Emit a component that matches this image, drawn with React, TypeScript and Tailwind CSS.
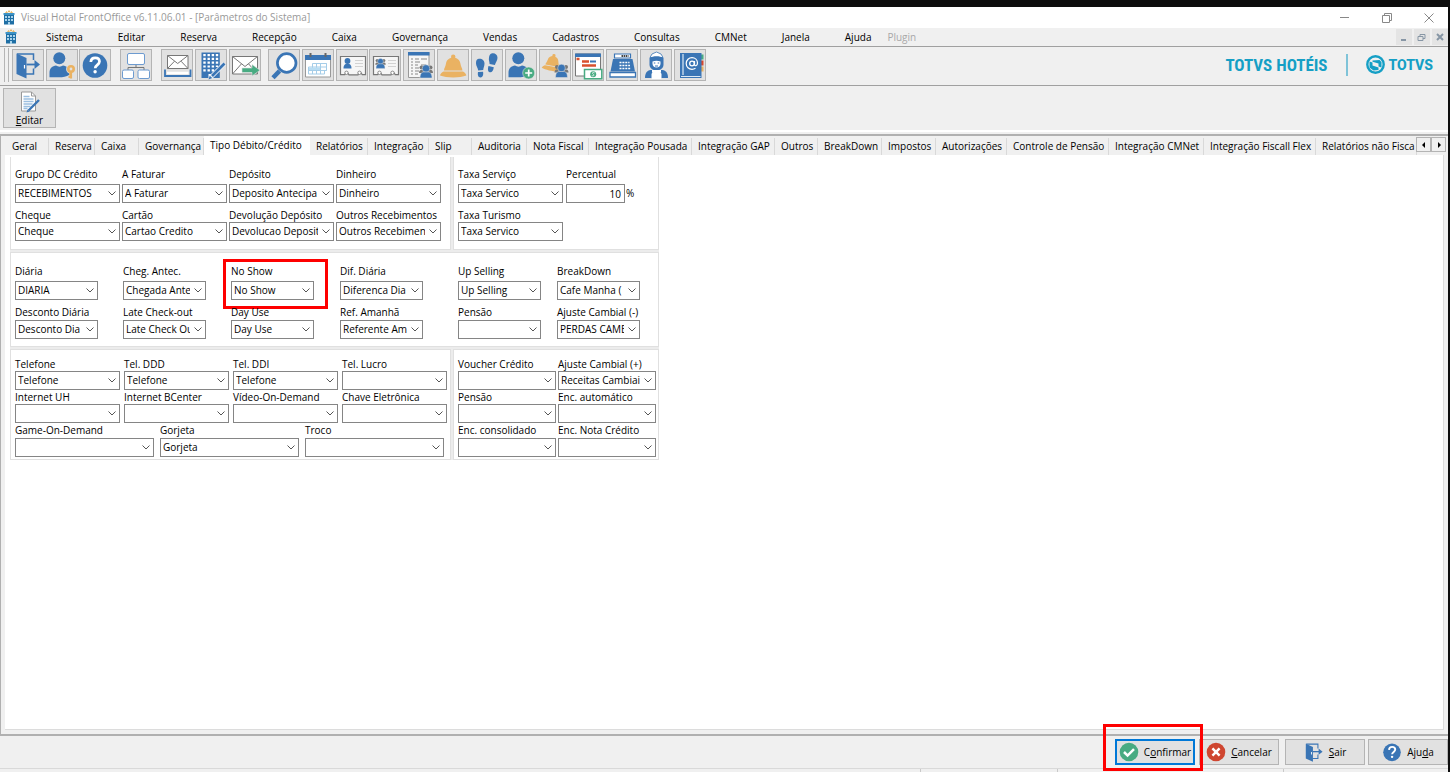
import type { ReactNode } from 'react';
import clsx from 'clsx';

const BLUE = '#3a75b5';
const ORANGE = '#eab262';
const GREEN = '#48ab82';

type Field = { label: string; value?: string; marked?: boolean };

const menus = ['Sistema', 'Editar', 'Reserva', 'Recepção', 'Caixa', 'Governança', 'Vendas', 'Cadastros', 'Consultas', 'CMNet', 'Janela', 'Ajuda'];

const tabs = [
  { name: 'Geral', width: 'w-[43px]' },
  { name: 'Reserva', width: 'w-[46px]' },
  { name: 'Caixa', width: 'w-[44px]' },
  { name: 'Governança', width: 'w-[65px]' },
  { name: 'Tipo Débito/Crédito', width: 'w-[106px]' },
  { name: 'Relatórios', width: 'w-[58px]' },
  { name: 'Integração', width: 'w-[61px]' },
  { name: 'Slip', width: 'w-[43px]' },
  { name: 'Auditoria', width: 'w-[55px]' },
  { name: 'Nota Fiscal', width: 'w-[62px]' },
  { name: 'Integração Pousada', width: 'w-[103px]' },
  { name: 'Integração GAP', width: 'w-[83px]' },
  { name: 'Outros', width: 'w-[43px]' },
  { name: 'BreakDown', width: 'w-[64px]' },
  { name: 'Impostos', width: 'w-[54px]' },
  { name: 'Autorizações', width: 'w-[71px]' },
  { name: 'Controle de Pensão', width: 'w-[102px]' },
  { name: 'Integração CMNet', width: 'w-[95px]' },
  { name: 'Integração Fiscall Flex', width: 'w-[112px]' },
  { name: 'Relatórios não Fisca', width: 'w-[101px]' },
];

/* ---------- icon pieces ---------- */

const Svg = ({ children, size = 30, box = '1 1 30 30' }: { children: ReactNode; size?: number; box?: string }) => (
  <svg width={size} height={size} viewBox={box} fill="none" className="shrink-0" aria-hidden="true">
    {children}
  </svg>
);

const Person = () => (
  <g fill={BLUE}>
    <circle cx="13.3" cy="9.3" r="6" />
    <path d="M3.5 28.3v-4.500c0-4.500 3-7 6.500-7.300 2 1.500 5 1.500 7 0 3.500.3 6.500 2.800 6.500 7.300v2c-3 2-7 2.500-10 2.500z" />
  </g>
);

const Crowd = ({ x, y, s = 1 }: { x: number; y: number; s?: number }) => (
  <g transform={`translate(${x} ${y}) scale(${s})`}>
    <g fill="#777">
      <circle cx="-4.500" cy="-4" r="2" />
      <circle cx="4.500" cy="-4" r="2" />
      <path d="M-7 1.500c0-2.500 1.500-3 2.500-3h9c1 0 2.500.5 2.500 3z" />
    </g>
    <circle cy="-3" r="3.800" fill={BLUE} stroke="#e1e1e1" strokeWidth=".5" />
    <path d="M-6 6.500C-6 2-4 .5-2.500.5h5C4 .5 6 2 6 6.500z" fill={BLUE} stroke="#e1e1e1" strokeWidth=".5" />
  </g>
);

const Door = () => (
  <>
    <path d="M5 5h16.500v6M21.500 19.500V25H14" stroke={BLUE} strokeWidth="1.500" />
    <path d="M4.500 4.500L14.500 9v20.500l-10-4.500z" fill={BLUE} />
    <path d="M14.500 15.500h11" stroke={BLUE} strokeWidth="1.800" />
    <path d="M22.500 11l5.500 4.500-5.500 4.500z" fill={BLUE} />
    <path d="M12.500 16v3.500" stroke="#fff" strokeWidth="1.200" />
  </>
);

const Pencil = () => (
  <>
    <path d="M15.500 28.500L29.500 14.500" stroke="#e8eef5" strokeWidth="4.500" />
    <path d="M17 27L29.500 14.500" stroke={BLUE} strokeWidth="2.600" />
    <path d="M13.500 30.500l1.200-3.800 2.500 2.400z" fill={BLUE} />
  </>
);

const Bell = () => (
  <g fill={ORANGE}>
    <circle cx="16.200" cy="7.800" r="2.200" />
    <path d="M7 21.500c0-2.500 1.500-3.500 2-7C9.500 11 12.500 8.500 16.200 8.500s6.700 2.500 7.200 6c.5 3.500 2 4.500 2 7z" />
    <path d="M6.500 22.500H26c1.800 1 3 2.300 3.300 4-6 2.500-20 2.500-26.300 0 .3-1.700 1.700-3 3.500-4z" />
  </g>
);

const Card = ({ children }: { children: ReactNode }) => (
  <>
    <path d="M4.500 7.500h25v18.200h-3.200l-1.500-2-2 1.200-.8 1h-9l-.8-1.200-2-1-1.400 2H4.500z" fill="#f6f6f6" stroke="#777" strokeWidth="1.200" />
    <circle cx="10.500" cy="23.800" r="1.700" fill="#fff" stroke="#888" />
    <circle cx="23.500" cy="23.800" r="1.700" fill="#fff" stroke="#888" />
    <path d="M19 11.500h8M19 14.500h8M19 17.500h8" stroke="#d2d2d2" />
    {children}
  </>
);

const Help = () => (
  <>
    <circle cx="16" cy="16.500" r="12.300" fill={BLUE} />
    <path d="M11.800 13c.2-2.800 2-4.200 4.400-4.200 2.500 0 4.300 1.500 4.300 3.800 0 3.200-4.300 3.300-4.300 6.600" stroke="#fff" strokeWidth="2.700" />
    <circle cx="16.100" cy="22.800" r="1.700" fill="#fff" />
  </>
);

const Envelope = ({ d, flap }: { d: string; flap: string }) => (
  <>
    <path d={d} fill="#fff" stroke="#777" />
    <path d={flap} stroke="#777" />
  </>
);

const toolbar: { name: string; icon: ReactNode }[][] = [
  [
    { name: 'Sair', icon: <Door /> },
    {
      name: 'Usuário',
      icon: (
        <>
          <Person />
          <circle cx="25" cy="20" r="2.900" stroke="#e1e1e1" strokeWidth="4" />
          <circle cx="25" cy="20" r="2.700" stroke={ORANGE} strokeWidth="2.600" />
          <path d="M25 23v6.500M25 28h-2.500M25 25.500h-2" stroke={ORANGE} strokeWidth="2.200" />
        </>
      ),
    },
    { name: 'Ajuda', icon: <Help /> },
  ],
  [
    {
      name: 'Estrutura',
      icon: (
        <g stroke="#6d9bd0">
          <path d="M16 16v3M8 21v-2.500h16V21" stroke="#777" />
          <rect x="7.500" y="4.500" width="17" height="11" rx="1.500" fill="#fff" />
          <rect x="2.500" y="21" width="11" height="8.500" rx="1.500" fill="#fff" />
          <rect x="18" y="21" width="11.500" height="8.500" rx="1.500" fill="#fff" />
        </g>
      ),
    },
  ],
  [
    {
      name: 'Caixa de entrada',
      icon: (
        <>
          <Envelope d="M6.500 6.500h20.500v13H6.500z" flap="M6.500 6.500l10.200 8 10.300-8M6.500 19.500l7-7.300M27 19.500l-7-7.300" />
          <path d="M4 20.500v6.500h25.500v-6.500" stroke={BLUE} strokeWidth="1.800" />
          <path d="M6 24h21.500" stroke="#fff" strokeWidth="2.500" />
        </>
      ),
    },
    {
      name: 'Hotel',
      icon: (
        <>
          <path d="M6.500 3.500h18.300V29H6.500z" fill={BLUE} />
          <path d="M9.500 5v18M13.700 5v18M17.900 5v18M22 5v13" stroke="#fff" strokeWidth="2.400" strokeDasharray="2.200 1.600" />
          <path d="M13.500 25h4v4h-4z" fill="#fff" />
          <Pencil />
        </>
      ),
    },
    {
      name: 'Enviar',
      icon: (
        <>
          <Envelope d="M3.500 7.500h25v17.500h-25z" flap="M3.500 7.500L16 17.500l12.500-10M3.500 25l9-10.200M28.500 25l-9-10.200" />
          <path d="M13 19h10v-3.500l8 5.700-8 5.800v-3.500H13z" fill={GREEN} stroke="#e1e1e1" strokeWidth=".6" />
        </>
      ),
    },
  ],
  [
    {
      name: 'Pesquisar',
      icon: (
        <>
          <path d="M11.500 22l-6.500 6.800" stroke={BLUE} strokeWidth="4.500" />
          <circle cx="18.700" cy="14" r="9.300" fill="#fff" stroke={BLUE} strokeWidth="2.700" />
        </>
      ),
    },
    {
      name: 'Calendário',
      icon: (
        <>
          <path d="M3.500 6.500h25v21.500h-25z" fill="#fff" stroke="#999" />
          <path d="M3 6h26v5H3z" fill={BLUE} />
          <path d="M8.500 4v4M23.500 4v4" stroke="#666" strokeWidth="2" />
          <path d="M10.500 14.500h14v3.500h-18v7h16v-3.500h2v-7M6.500 21.500h18M10.500 14.500V25M14.500 14.500V25M18.500 14.500V25" stroke="#a5cde8" />
          <path d="M7 18.500h11V21H7z" fill="#b9ddf3" />
        </>
      ),
    },
    {
      name: 'Ficha do hóspede',
      icon: (
        <Card>
          <circle cx="11.500" cy="12" r="2.900" fill={BLUE} />
          <path d="M7.500 19.500c0-3.500 1.500-4.700 4-4.700s4 1.200 4 4.700z" fill={BLUE} />
        </Card>
      ),
    },
    {
      name: 'Ficha do grupo',
      icon: (
        <Card>
          <Crowd x={11.5} y={14.5} s={0.75} />
        </Card>
      ),
    },
    {
      name: 'Relatório de hóspedes',
      icon: (
        <>
          <path d="M5.500 3.500h20.500v25H5.500z" fill="#f6f6f6" stroke="#999" />
          <path d="M5 3h21.500v3.500H5z" fill={BLUE} />
          <path d="M8 10h2M8 13h2M8 16h2M8 19h2M8 22h2M8 25h2M12 10h4M18 10h6M12 13h5M12 16h3M18 16h5M12 19h4M12 22h4M12 25h3" stroke="#888" />
          <Crowd x={23} y={22.5} />
        </>
      ),
    },
    { name: 'Campainha', icon: <Bell /> },
    {
      name: 'Passantes',
      icon: (
        <g fill={BLUE}>
          <path d="M7 10c3-1 6.500.8 6.500 4.500 0 2.500-1 4-1.300 6.500l-5 .5C7 19 5 17 5 14.500 5 12 5.500 10.500 7 10z" />
          <path d="M7 23l5-.3c.7 3-.3 5.500-2.400 5.700C7 28.500 6.500 26 7 23z" />
          <path d="M20.500 4.500c2.500-1 6 .5 6 4.200 0 3-2 4.800-2.600 7.300l-5.300-1C18.500 12.500 17.500 11 18 8.500c.3-2 1-3.500 2.500-4z" />
          <path d="M17.500 17l5.300 1.200c-.5 3.800-2.200 5.500-4 5-2.200-.5-2.100-3.500-1.300-6.200z" />
        </g>
      ),
    },
    {
      name: 'Novo hóspede',
      icon: (
        <>
          <Person />
          <circle cx="23.700" cy="24" r="6" fill={GREEN} stroke="#e1e1e1" strokeWidth=".6" />
          <path d="M23.700 20.500v7M20.200 24h7" stroke="#fff" strokeWidth="1.700" />
        </>
      ),
    },
    {
      name: 'Serviço de grupo',
      icon: (
        <>
          <g transform="translate(1 1) rotate(10 14 16) scale(.75)">
            <Bell />
          </g>
          <Crowd x={22.5} y={22} />
        </>
      ),
    },
    {
      name: 'Tarifas',
      icon: (
        <>
          <path d="M3.500 5h25v22h-25z" fill="#fff" stroke="#777" />
          <path d="M3 4.500h26V8H3z" fill={BLUE} />
          <path d="M4.500 10h3M10 12.500h7M10 16.500h14" stroke="#d9512f" strokeWidth="2.500" />
          <path d="M18 12.500h6" stroke={BLUE} strokeWidth="2" />
          <path d="M12.500 20.500h17.300v9.300H12.500z" fill="#fff" stroke={GREEN} strokeWidth="1.500" />
          <circle cx="21.200" cy="25.200" r="3" fill={GREEN} />
          <path d="M22.500 23.800c-1.500-1-3 .2-1.300 1.300s0 2.500-1.400 1.400" stroke="#fff" strokeWidth=".8" />
        </>
      ),
    },
    {
      name: 'Caixa registradora',
      icon: (
        <>
          <path d="M8.500 5h16v4h-16z" fill="#fff" stroke={BLUE} strokeWidth="1.200" />
          <path d="M15.500 7h7" stroke="#444" strokeWidth="1.800" strokeDasharray="1.500 .6" />
          <path d="M7 10h19.500l2.500 12.500H4.500z" fill={BLUE} />
          <path d="M13.500 13.500h10M13.500 16.500h10.500M13.500 19.500h11" stroke="#fff" strokeWidth="1.700" strokeDasharray="2 .9" />
          <path d="M4 23.500h25.500v4.500H4z" fill="#fff" stroke={BLUE} strokeWidth="1.300" />
        </>
      ),
    },
    {
      name: 'Camareira',
      icon: (
        <>
          <path d="M10 8.500l2-3.500 4.500-2 4.500 2 2 3.500z" fill="#fff" stroke={BLUE} strokeWidth=".8" />
          <path d="M9.500 9c3.500-2.500 10.500-2.500 14 0v6.500c0 3.500-3 6-7 6s-7-2.500-7-6z" fill={BLUE} />
          <path d="M12.500 12.500c2.500-1 5.500-1 8 0v2c0 2.500-1.800 4-4 4s-4-1.500-4-4z" fill="#fff" />
          <path d="M13.800 14h1.500M17.700 14h1.500M15 17h3" stroke={BLUE} />
          <path d="M5 29c0-5 2-7.500 5.500-8h12c3.500.5 5.500 3 5.500 8z" fill={BLUE} />
          <path d="M12.500 21v2.500h8V21M12 24.500h9v5h-9z" fill="#fff" stroke="#fff" />
        </>
      ),
    },
    {
      name: 'Agenda de contatos',
      icon: (
        <>
          <path d="M24.500 5.500h5v5h-5z" fill={GREEN} />
          <path d="M24.500 11.500h5v5h-5z" fill="#d9482f" />
          <path d="M24.500 17.500h5v5h-5z" fill={ORANGE} />
          <path d="M6 4h21.500v25H6z" fill={BLUE} />
          <path d="M7 27.500h19.500M9 5v21" stroke="#dce9f5" strokeWidth="1.200" />
          <circle cx="18" cy="14.500" r="2.300" stroke="#fff" strokeWidth="1.300" />
          <path d="M20.500 12v3.500c0 2 3 1.600 3-1.500 0-3.300-2.500-5.300-5.500-5.300s-5.800 2.300-5.800 5.800 2.800 5.800 5.800 5.800c1.500 0 2.500-.4 3.500-1" stroke="#fff" strokeWidth="1.200" />
        </>
      ),
    },
  ],
];

const HotelMark = () => (
  <svg width="12" height="16" viewBox="0 0 12 16" className="shrink-0" aria-hidden="true">
    <path d="M1 4h10v10.500H1z" fill="#1f6fa5" />
    <path d="M.5 3h11v2H.5z" fill="#3d93c6" />
    <path d="M2.500 2.500l1-1 1 1zM5 1.800l1-1.300 1 1.300zM7.500 2.500l1-1 1 1z" fill="#e3a53d" stroke="#e3a53d" strokeWidth=".5" />
    <path d="M2 6h2v2H2zM5 6h2v2H5zM8 6h2v2H8zM2 9h2v2H2zM5 9h2v2H5zM8 9h2v2H8zM5 12h2v3H5z" fill="#a9d4ec" />
  </svg>
);

/* ---------- form pieces ---------- */

const Combo = ({ label, value, marked, labelGap, width }: Field & { labelGap: string; width: string }) => (
  <label className={clsx('relative block', width)}>
    <span className={clsx('block h-3 whitespace-nowrap leading-3', labelGap)}>{label}</span>
    <span className="relative block">
      <select defaultValue={value ?? ''} className="block h-[19px] w-full appearance-none rounded-none border border-[#858585] bg-white pl-[2px] pr-[15px] text-black outline-none">
        <option>{value ?? ''}</option>
      </select>
      <svg width="8" height="5" viewBox="0 0 8 5" className="pointer-events-none absolute right-1 top-[7px]" aria-hidden="true">
        <path d="M.5.5L4 4 7.500.5" fill="none" stroke="#555" />
      </svg>
    </span>
    {marked && <span className="pointer-events-none absolute -inset-x-2 -top-[6px] h-[50px] w-[105px] border-[3px] border-[#fe0000]" />}
  </label>
);

const Row = ({ fields, cols, width = 'w-full', labelGap = 'mb-px', children }: { fields: Field[]; cols: string; width?: string; labelGap?: string; children?: ReactNode }) => (
  <div className={clsx('grid', cols)}>
    {fields.map((field, i) => (
      <Combo key={i} {...field} width={width} labelGap={labelGap} />
    ))}
    {children}
  </div>
);

const Parameters = () => (
  <div className="flex w-[649px] flex-col gap-[2px] bg-[#ececec]">
    <div className="flex gap-[2px]">
      <section className="flex w-[441px] flex-col gap-[6px] border border-t-0 border-[#e0e0e0] bg-white pb-2 pl-1 pt-[11px]">
        <Row
          cols="grid-cols-[repeat(4,105px)] gap-x-[2px]"
          labelGap="mb-1"
          fields={[
            { label: 'Grupo DC Crédito', value: 'RECEBIMENTOS' },
            { label: 'A Faturar', value: 'A Faturar' },
            { label: 'Depósito', value: 'Deposito Antecipa' },
            { label: 'Dinheiro', value: 'Dinheiro' },
          ]}
        />
        <Row
          cols="grid-cols-[repeat(4,105px)] gap-x-[2px]"
          fields={[
            { label: 'Cheque', value: 'Cheque' },
            { label: 'Cartão', value: 'Cartao Credito' },
            { label: 'Devolução Depósito', value: 'Devolucao Deposit' },
            { label: 'Outros Recebimentos', value: 'Outros Recebimen' },
          ]}
        />
      </section>
      <section className="flex flex-1 flex-col gap-[6px] border border-t-0 border-[#e0e0e0] bg-white pb-2 pl-1 pt-[11px]">
        <Row cols="grid-cols-[105px_80px] gap-x-[3px]" labelGap="mb-1" fields={[{ label: 'Taxa Serviço', value: 'Taxa Servico' }]}>
          <label className="block">
            <span className="mb-1 block h-3 leading-3">Percentual</span>
            <span className="flex items-center gap-px">
              <input defaultValue="10" className="h-[19px] w-[59px] border border-[#858585] px-[3px] text-right outline-none" />
              <span>%</span>
            </span>
          </label>
        </Row>
        <Row cols="grid-cols-[105px]" fields={[{ label: 'Taxa Turismo', value: 'Taxa Servico' }]} />
      </section>
    </div>

    <section className="flex flex-col gap-[6px] border border-[#e0e0e0] bg-white pb-[7px] pl-1 pt-3">
      <Row
        cols="grid-cols-[108px_108px_109px_118px_99px_83px]"
        width="w-[83px]"
        labelGap="mb-1"
        fields={[
          { label: 'Diária', value: 'DIARIA' },
          { label: 'Cheg. Antec.', value: 'Chegada Antecipada' },
          { label: 'No Show', value: 'No Show', marked: true },
          { label: 'Dif. Diária', value: 'Diferenca Dia' },
          { label: 'Up Selling', value: 'Up Selling' },
          { label: 'BreakDown', value: 'Cafe Manha (' },
        ]}
      />
      <Row
        cols="grid-cols-[108px_108px_109px_118px_99px_83px]"
        width="w-[83px]"
        labelGap="mb-[2px]"
        fields={[
          { label: 'Desconto Diária', value: 'Desconto Dia' },
          { label: 'Late Check-out', value: 'Late Check Out' },
          { label: 'Day Use', value: 'Day Use' },
          { label: 'Ref. Amanhã', value: 'Referente Am' },
          { label: 'Pensão' },
          { label: 'Ajuste Cambial (-)', value: 'PERDAS CAMBIAIS' },
        ]}
      />
    </section>

    <div className="flex gap-[2px]">
      <section className="flex w-[441px] flex-col gap-px border border-[#e0e0e0] bg-white pb-[2px] pl-1 pt-2">
        <Row
          cols="grid-cols-[repeat(4,105px)] gap-x-1"
          fields={[
            { label: 'Telefone', value: 'Telefone' },
            { label: 'Tel. DDD', value: 'Telefone' },
            { label: 'Tel. DDI', value: 'Telefone' },
            { label: 'Tel. Lucro' },
          ]}
        />
        <Row
          cols="grid-cols-[repeat(4,105px)] gap-x-1"
          fields={[{ label: 'Internet UH' }, { label: 'Internet BCenter' }, { label: 'Vídeo-On-Demand' }, { label: 'Chave Eletrônica' }]}
        />
        <Row
          cols="grid-cols-[repeat(3,139px)] gap-x-[6px]"
          labelGap="mb-[2px]"
          fields={[{ label: 'Game-On-Demand' }, { label: 'Gorjeta', value: 'Gorjeta' }, { label: 'Troco' }]}
        />
      </section>
      <section className="flex flex-1 flex-col gap-px border border-[#e0e0e0] bg-white pb-[2px] pl-1 pt-2">
        <Row cols="grid-cols-[98px_98px] gap-x-[2px]" fields={[{ label: 'Voucher Crédito' }, { label: 'Ajuste Cambial (+)', value: 'Receitas Cambiai' }]} />
        <Row cols="grid-cols-[98px_98px] gap-x-[2px]" fields={[{ label: 'Pensão' }, { label: 'Enc. automático' }]} />
        <Row cols="grid-cols-[98px_98px] gap-x-[2px]" labelGap="mb-[2px]" fields={[{ label: 'Enc. consolidado' }, { label: 'Enc. Nota Crédito' }]} />
      </section>
    </div>
  </div>
);

const FooterButton = ({ icon, children, focused, marked }: { icon: ReactNode; children: ReactNode; focused?: boolean; marked?: boolean }) => (
  <button
    className={clsx(
      'relative flex h-[26px] w-20 items-center justify-center gap-[5px] whitespace-nowrap bg-[#e1e1e1]',
      focused ? 'border-2 border-[#0078d7]' : 'border border-[#b4b4b4]',
    )}
  >
    <Svg size={20} box="2 2 28 28">{icon}</Svg>
    <span>{children}</span>
    {marked && <span className="pointer-events-none absolute -left-[14px] -top-[17px] z-10 h-[47px] w-[100px] border-[3px] border-[#fe0000]" />}
  </button>
);

const App = () => {
  return (
    <div className="flex h-screen flex-col overflow-hidden bg-[#0d0d0d] pr-[2px] pt-[7px] font-['Open_Sans','Noto_Sans',sans-serif] text-[10px] font-medium text-black">
      {/* Title bar */}
      <header className="flex h-[21px] shrink-0 items-center bg-white pl-[3px] pr-[14px] text-[#999]">
        <HotelMark />
        <h1 className="ml-[6px] flex-1 text-[10px]">Visual Hotal FrontOffice v6.11.06.01 - [Parâmetros do Sistema]</h1>
        <div className="flex items-center gap-8">
          <button aria-label="Minimizar">
            <svg width="10" height="10" viewBox="0 0 10 10"><path d="M0 4.500h9" stroke="#888" /></svg>
          </button>
          <button aria-label="Restaurar">
            <svg width="10" height="10" viewBox="0 0 10 10" fill="none" stroke="#888"><path d="M.5 2.500h7v7h-7zM2.500 2.500v-2h7v7h-2" /></svg>
          </button>
          <button aria-label="Fechar">
            <svg width="10" height="10" viewBox="0 0 10 10"><path d="M.5.5l9 9M9.500.5l-9 9" stroke="#888" /></svg>
          </button>
        </div>
      </header>

      {/* Menu */}
      <nav className="flex h-[19px] shrink-0 items-center border-b border-[#a0a0a0] bg-[#f0f0f0] pl-[5px]">
        <HotelMark />
        <div className="ml-[29px] flex flex-1 gap-[35px]">
          {menus.map((menu) => (
            <button key={menu}>{menu}</button>
          ))}
          <button disabled className="-ml-[19px] text-[#a8a8a8]">Plugin</button>
        </div>
        <div className="flex gap-[2px]">
          {['M5 11h5', 'M4 7.500h5v4H4zM6 7.500v-2h5v4H9', 'M5 5l6 6M11 5l-6 6'].map((d, i) => (
            <button key={d} aria-label={['Minimizar janela', 'Restaurar janela', 'Fechar janela'][i]} className="bg-[#e4e4e4]">
              <svg width="16" height="16" viewBox="0 0 16 16" fill="none" stroke="#8796a5" strokeWidth={i === 1 ? 1 : 2}><path d={d} /></svg>
            </button>
          ))}
        </div>
      </nav>

      {/* Toolbar */}
      <div className="flex h-[39px] shrink-0 items-center border-b border-[#a0a0a0] bg-[#f0f0f0] pb-[3px] pl-1">
        <div className="mr-[3px] h-[34px] w-[5px] border-x border-[#b5b5b5]" />
        {toolbar.map((group, i) => (
          <div key={i} className={clsx('flex justify-between', ['mr-[9px] w-[99px]', 'mr-[9px] w-8', 'mr-[7px] w-[100px]', 'w-[438px]'][i])}>
            {group.map((tool) => (
              <button key={tool.name} aria-label={tool.name} title={tool.name} className="h-8 w-8 border border-[#b4b4b4] bg-[#e1e1e1]">
                <Svg>{tool.icon}</Svg>
              </button>
            ))}
          </div>
        ))}
        <div className="ml-auto mr-[15px] flex items-center font-['Roboto',sans-serif] text-[#159fc5]">
          <span className="font-['Roboto_Condensed','Roboto',sans-serif] text-[17px] font-bold leading-5">TOTVS HOTÉIS</span>
          <span className="ml-[18px] mr-[18px] h-[22px] w-[2px] bg-[#7fc3d8]" />
          <svg width="19" height="19" viewBox="0 0 19 19" fill="none" aria-hidden="true">
            <circle cx="9.500" cy="9.500" r="8.200" stroke="currentColor" strokeWidth="2.400" />
            <path d="M6.500 5.500l7-.5 2 2v5.500l-3-1V8.500l-6-1.800z" fill="currentColor" />
            <path d="M3.500 6.500l3 1v3l6 2v2.500l-5 .5-4-3z" fill="currentColor" />
          </svg>
          <span className="ml-1 text-[14px] font-extrabold leading-5">TOTVS</span>
        </div>
      </div>

      {/* Record actions */}
      <div className="h-[46px] shrink-0 border-b-2 border-white bg-[#f0f0f0] pl-[3px] pt-[2px]">
        <button className="flex h-10 w-[53px] flex-col items-center border border-[#b4b4b4] bg-[#e1e1e1] pt-[2px] leading-[14px]">
          <svg width="20" height="22" viewBox="0 0 20 22" fill="none" aria-hidden="true">
            <path d="M1.500 1h10l4 4v15h-14z" fill="#fff" stroke="#999" />
            <path d="M11.500 1v4h4" stroke="#999" />
            <path d="M3.500 5.500h6M3.500 8h10M3.500 10.500h10M3.500 13h9M3.500 15.500h7M3.500 17.500h4" stroke="#9cbfe0" strokeWidth="1.500" />
            <path d="M8.500 19.500L19 9" stroke={BLUE} strokeWidth="2.400" />
            <path d="M6.500 21.500l1-3 2 2z" fill={BLUE} />
          </svg>
          <span><u>E</u>ditar</span>
        </button>
      </div>

      {/* Tab sheet */}
      <main className="flex min-h-0 flex-1 flex-col bg-[#f0f0f0] pt-[2px]">
        <div className="flex min-h-0 flex-1 flex-col border-b-2 border-l border-t-2 border-[#b0b0b0] pb-1">
          <div className="ml-[5px] flex h-[19px] shrink-0">
            <div role="tablist" className="flex min-w-0 flex-1 items-end">
              {tabs.map((tab, i) => (
                <button
                  key={tab.name}
                  role="tab"
                  aria-selected={i === 4}
                  className={clsx(
                    'shrink-0 whitespace-nowrap pl-[6px] text-left leading-[17px]',
                    tab.width,
                    i === 4 ? 'h-[19px] bg-white' : 'h-[17px] border-r border-[#d9d9d9]',
                  )}
                >
                  {tab.name}
                </button>
              ))}
            </div>
            <div className="mr-[2px] flex pt-px">
              {['M5 4v6L2 7z', 'M3 4v6l3-3z'].map((d, i) => (
                <button key={d} aria-label={i ? 'Próximas abas' : 'Abas anteriores'} className="flex h-[15px] w-[15px] items-center justify-center border border-[#b4b4b4] bg-[#f0f0f0]">
                  <svg width="8" height="14" viewBox="0 0 8 14"><path d={d} /></svg>
                </button>
              ))}
            </div>
          </div>
          <div role="tabpanel" className="mx-1 min-h-0 flex-1 border-b border-r border-[#dcdcdc] bg-white pl-[5px] pt-[2px]">
            <Parameters />
          </div>
        </div>
      </main>

      {/* Footer */}
      <footer className="shrink-0 bg-[#f0f0f0]">
        <div className="flex h-8 justify-end pt-[3px]">
          <div className="mr-1">
            <FooterButton
              focused
              marked
              icon={<><circle cx="16" cy="16" r="13" fill={GREEN} /><path d="M9 16l5 5 9-9" stroke="#fff" strokeWidth="3.500" /></>}
            >
              C<u>o</u>nfirmar
            </FooterButton>
          </div>
          <div className="mr-[6px]">
            <FooterButton icon={<><circle cx="16" cy="16" r="13" fill="#cf4630" /><path d="M11 11l10 10M21 11L11 21" stroke="#fff" strokeWidth="3.500" /></>}>
              <u>C</u>ancelar
            </FooterButton>
          </div>
          <div className="mr-[3px]">
            <FooterButton icon={<Door />}><u>S</u>air</FooterButton>
          </div>
          <FooterButton icon={<Help />}>Aju<u>d</u>a</FooterButton>
        </div>
        <div className="flex h-1 justify-end border-t border-[#d9d9d9]">
          <div className="w-[137px] border-l border-[#c9c9c9]" />
          <div className="w-[226px] border-l border-[#c9c9c9]" />
          <div className="w-[165px] border-l border-[#c9c9c9]" />
        </div>
      </footer>
    </div>
  );
};

export default App;
